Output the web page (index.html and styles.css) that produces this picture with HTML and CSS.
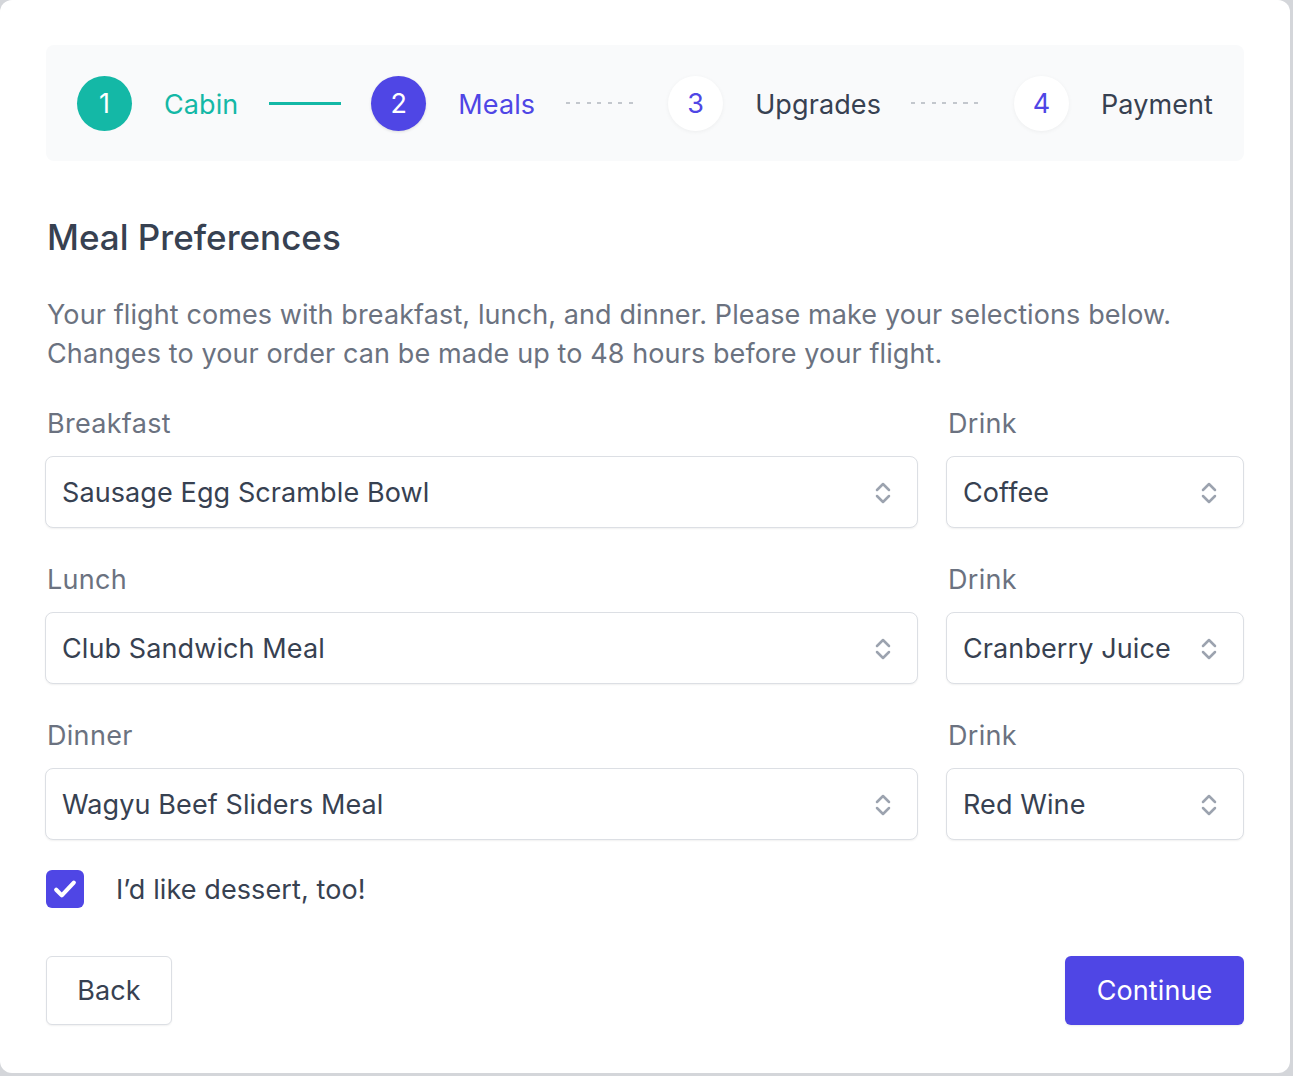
FILE: index.html
```html
<!DOCTYPE html>
<html lang="en">
<head>
<meta charset="utf-8">
<title>Meal Preferences</title>
<link rel="stylesheet" href="styles.css">
</head>
<body>
<div class="card">
  <nav class="stepper">
    <div class="step done">
      <span class="circle">1</span>
      <span class="step-label">Cabin</span>
    </div>
    <span class="connector solid"></span>
    <div class="step current">
      <span class="circle">2</span>
      <span class="step-label">Meals</span>
    </div>
    <span class="connector dotted"></span>
    <div class="step upcoming">
      <span class="circle">3</span>
      <span class="step-label">Upgrades</span>
    </div>
    <span class="connector dotted"></span>
    <div class="step upcoming">
      <span class="circle">4</span>
      <span class="step-label">Payment</span>
    </div>
  </nav>

  <h1 class="title">Meal Preferences</h1>
  <p class="intro">Your flight comes with breakfast, lunch, and dinner. Please make your selections below.<br>Changes to your order can be made up to 48 hours before your flight.</p>

  <div class="meal-grid">
    <div class="field">
      <label class="label">Breakfast</label>
      <div class="select"><span>Sausage Egg Scramble Bowl</span><svg class="chev" viewBox="0 0 20 20" fill="none" stroke="currentColor" stroke-width="1.7" stroke-linecap="round" stroke-linejoin="round"><path d="M6 8l4-4 4 4M6 12l4 4 4-4"/></svg></div>
    </div>
    <div class="field">
      <label class="label">Drink</label>
      <div class="select"><span>Coffee</span><svg class="chev" viewBox="0 0 20 20" fill="none" stroke="currentColor" stroke-width="1.7" stroke-linecap="round" stroke-linejoin="round"><path d="M6 8l4-4 4 4M6 12l4 4 4-4"/></svg></div>
    </div>
    <div class="field">
      <label class="label">Lunch</label>
      <div class="select"><span>Club Sandwich Meal</span><svg class="chev" viewBox="0 0 20 20" fill="none" stroke="currentColor" stroke-width="1.7" stroke-linecap="round" stroke-linejoin="round"><path d="M6 8l4-4 4 4M6 12l4 4 4-4"/></svg></div>
    </div>
    <div class="field">
      <label class="label">Drink</label>
      <div class="select"><span>Cranberry Juice</span><svg class="chev" viewBox="0 0 20 20" fill="none" stroke="currentColor" stroke-width="1.7" stroke-linecap="round" stroke-linejoin="round"><path d="M6 8l4-4 4 4M6 12l4 4 4-4"/></svg></div>
    </div>
    <div class="field">
      <label class="label">Dinner</label>
      <div class="select"><span>Wagyu Beef Sliders Meal</span><svg class="chev" viewBox="0 0 20 20" fill="none" stroke="currentColor" stroke-width="1.7" stroke-linecap="round" stroke-linejoin="round"><path d="M6 8l4-4 4 4M6 12l4 4 4-4"/></svg></div>
    </div>
    <div class="field">
      <label class="label">Drink</label>
      <div class="select"><span>Red Wine</span><svg class="chev" viewBox="0 0 20 20" fill="none" stroke="currentColor" stroke-width="1.7" stroke-linecap="round" stroke-linejoin="round"><path d="M6 8l4-4 4 4M6 12l4 4 4-4"/></svg></div>
    </div>
  </div>

  <div class="check-row">
    <span class="checkbox"><svg viewBox="0 0 20 20" fill="none" stroke="#fff" stroke-width="2.6" stroke-linecap="round" stroke-linejoin="round"><path d="M4.5 10.5l3.5 3.5 7.5-8"/></svg></span>
    <span class="check-label">I’d like dessert, too!</span>
  </div>

  <div class="actions">
    <button class="btn btn-back">Back</button>
    <button class="btn btn-continue">Continue</button>
  </div>
</div>
</body>
</html>
```

FILE: styles.css
```css
* { box-sizing: border-box; }
html, body { margin: 0; padding: 0; }
body {
  background: #d4d6da;
  font-family: Inter, "Noto Sans", sans-serif;
  width: 1293px;
  height: 1076px;
  overflow: hidden;
  letter-spacing: 0.1px;
}
.card {
  width: 1290px;
  height: 1073px;
  background: #fff;
  border-radius: 12px;
  padding: 45px 46px 47px 46px;
  display: flex;
  flex-direction: column;
}
.stepper {
  height: 116px;
  background: #f9fafb;
  border-radius: 8px;
  display: flex;
  align-items: center;
  justify-content: space-between;
  padding: 0 31px;
}
.step {
  display: flex;
  align-items: center;
  gap: 32px;
}
.circle {
  width: 55px;
  height: 55px;
  border-radius: 50%;
  display: flex;
  align-items: center;
  justify-content: center;
  font-size: 27px;
  font-weight: 400;
}
.step-label { font-size: 27px; line-height: 32px; padding-top: 3px; }
.done .circle { background: #14b8a6; color: #fff; }
.done .step-label { color: #14b8a6; }
.current .circle { background: #4f46e5; color: #fff; box-shadow: 0 1px 3px rgba(0,0,0,0.12); }
.current .step-label { color: #4f46e5; }
.upcoming .circle { background: #fff; color: #4f46e5; box-shadow: 0 1px 4px rgba(0,0,0,0.05); }
.upcoming .step-label { color: #374151; }
.connector { width: 72px; height: 3px; display: block; }
.connector.solid { background: #14b8a6; height: 3px; }
.connector.dotted {
  height: 2px;
  background: repeating-linear-gradient(to right, #c3c7cd 0 4px, transparent 4px 10.5px);
}
.title {
  margin: 54px 0 0 1px;
  font-size: 35px;
  line-height: 44px;
  font-weight: 500;
  color: #374151;
  letter-spacing: 0;
}
.intro {
  margin: 36px 0 0 1px;
  font-size: 27px;
  line-height: 39px;
  color: #6b7280;
}
.meal-grid {
  margin-top: 31px;
  display: grid;
  grid-template-columns: 1fr 298px;
  column-gap: 28px;
  row-gap: 32px;
  margin-left: -1px;
}
.field { display: flex; flex-direction: column; gap: 14px; }
.label {
  font-size: 27px;
  line-height: 36px;
  padding-top: 2px;
  color: #6b7280;
  padding-left: 2px;
  letter-spacing: 0.3px;
}
.select {
  height: 72px;
  border: 1px solid #dcdfe4;
  border-radius: 8px;
  box-shadow: 0 1px 2px rgba(0,0,0,0.06);
  display: flex;
  align-items: center;
  justify-content: space-between;
  padding: 1px 19px 0 16px;
  font-size: 27px;
  color: #374151;
  background: #fff;
}
.chev { width: 30px; height: 30px; color: #9ca3af; }
.check-row {
  margin-top: 30px;
  display: flex;
  align-items: center;
  gap: 32px;
}
.checkbox {
  width: 38px;
  height: 38px;
  border-radius: 6px;
  background: #4f46e5;
  display: flex;
  align-items: center;
  justify-content: center;
}
.checkbox svg { width: 32px; height: 32px; }
.check-label { font-size: 27px; color: #374151; }
.actions {
  margin-top: 48px;
  display: flex;
  justify-content: space-between;
  align-items: center;
}
.btn {
  font-family: Inter, "Noto Sans", sans-serif;
  font-size: 27px;
  letter-spacing: 0.1px;
  height: 69px;
  border-radius: 6px;
  cursor: pointer;
}
.btn-back {
  width: 126px;
  background: #fff;
  color: #374151;
  border: 1px solid #dcdfe4;
  box-shadow: 0 1px 2px rgba(0,0,0,0.06);
}
.btn-continue {
  width: 179px;
  background: #4f46e5;
  color: #fff;
  border: none;
  box-shadow: 0 1px 2px rgba(0,0,0,0.08);
}
```
